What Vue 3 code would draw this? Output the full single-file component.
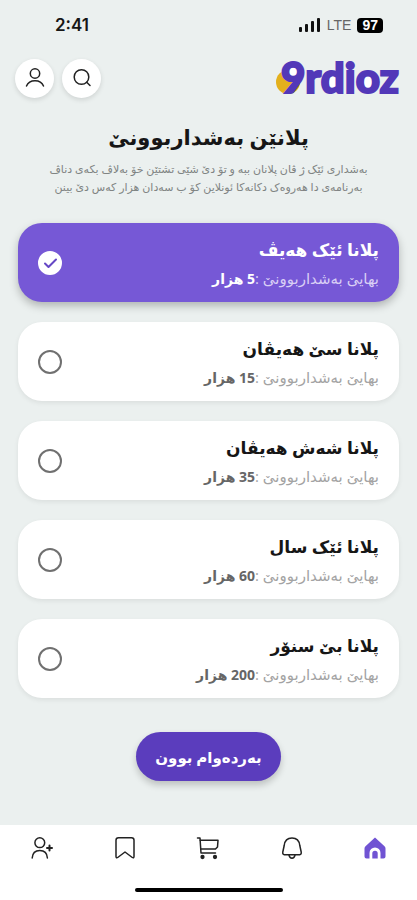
<script setup>
import { ref } from 'vue'

const plans = [
  { id: 'one', title: 'پلانا ئێک هەیڤ', price: 5 },
  { id: 'three', title: 'پلانا سێ هەیڤان', price: 15 },
  { id: 'six', title: 'پلانا شەش هەیڤان', price: 35 },
  { id: 'year', title: 'پلانا ئێک سال', price: 60 },
  { id: 'unlimited', title: 'پلانا بێ سنۆر', price: 200 }
]
const selected = ref('one')
</script>

<template>
  <div class="page">
    <div class="status">
      <span class="time">2:41</span>
      <div class="status-right">
        <svg class="signal" width="22" height="14" viewBox="0 0 22 14">
          <rect x="0" y="9" width="3" height="5" rx="1" />
          <rect x="6" y="6" width="3" height="8" rx="1" />
          <rect x="12" y="3" width="3" height="11" rx="1" />
          <rect x="18" y="0" width="3" height="14" rx="1" />
        </svg>
        <span class="network">LTE</span>
        <span class="battery">97</span>
      </div>
    </div>

    <header class="top">
      <div class="actions">
        <button class="round" type="button">
          <svg width="22" height="22" viewBox="0 0 22 22">
            <circle cx="11" cy="6.500" r="4.700" />
            <path d="M2.500 19c1.400-3.500 4.600-5.300 8.500-5.300s7.100 1.800 8.500 5.300" />
          </svg>
        </button>
        <button class="round" type="button">
          <svg width="22" height="22" viewBox="0 0 22 22">
            <circle cx="10.500" cy="10" r="7.300" />
            <path d="M15.700 15.200L19 18.500" />
          </svg>
        </button>
      </div>
      <svg class="logo" width="128" height="50" viewBox="0 0 128 50">
        <circle cx="12" cy="29" r="12" fill="#e3b01c" />
        <circle cx="17" cy="20" r="8" fill="#fff" />
        <circle cx="55" cy="29" r="8" fill="#fff" />
        <circle cx="91" cy="29" r="8" fill="#fff" />
        <text x="5" y="40">9rdioz</text>
      </svg>
    </header>

    <main class="content" dir="rtl">
      <h1>پلانێن بەشداربوونێ</h1>
      <p class="intro">
        بەشداری ئێک ژ ڤان پلانان ببە و تۆ دێ شێی تشتێن خۆ بەلاڤ بکەی دناڤ<br />
        بەرنامەی دا هەروەک دکانەکا ئونلاین کۆ ب سەدان هزار کەس دێ بینن
      </p>

      <div class="plans">
        <label
          v-for="plan in plans"
          :key="plan.id"
          class="plan"
          :class="{ active: selected === plan.id }"
        >
          <span class="text">
            <span class="title">{{ plan.title }}</span>
            <span class="price">بهایێ بەشداربوونێ :<b>{{ plan.price }} هزار</b></span>
          </span>
          <span class="mark">
            <input v-model="selected" type="radio" name="plan" :value="plan.id" />
            <svg v-if="selected === plan.id" width="24" height="24" viewBox="0 0 24 24">
              <path d="M7 12.500l3.500 3.500 7.500-7.500" />
            </svg>
          </span>
        </label>
      </div>

      <button class="continue" type="button">بەردەوام بوون</button>
    </main>

    <nav class="nav" dir="rtl">
      <div class="tabs">
        <a href="#home" class="home">
          <svg width="24" height="24" viewBox="0 0 24 24">
            <path d="M12 1.500L2.500 10.200q-1 1-1 2.300V20.500q0 2 2 2H6.500V17a5.500 5.500 0 0 1 11 0V22.500H20.500q2 0 2-2V12.500q0-1.300-1-2.300z" />
            <path d="M9.300 22.500V17.500a2.700 2.700 0 0 1 5.400 0V22.500z" />
          </svg>
        </a>
        <a href="#alerts">
          <svg width="24" height="24" viewBox="0 0 24 24">
            <path d="M12 2C7.500 2 4.700 5 4.200 9.500L2.800 16q-.4 2.500 1.500 2.700h15.400q1.900-.2 1.500-2.700l-1.400-6.500C19.300 5 16.500 2 12 2z" />
            <path d="M9 19.200q.6 3 3 3t3-3" />
          </svg>
        </a>
        <a href="#cart">
          <svg width="24" height="24" viewBox="0 0 24 24">
            <path d="M1.500 2H4l1 15h14.500" />
            <path d="M4.200 4.200H22L21.500 11 19.500 13H5" />
            <circle cx="6.500" cy="21" r="1.400" class="dot" />
            <circle cx="19" cy="21" r="1.400" class="dot" />
          </svg>
        </a>
        <a href="#saved">
          <svg width="24" height="24" viewBox="0 0 24 24">
            <path d="M5.500 1.800h13q2.500 0 2.500 2.500V20.500q-.2 2-1.700 1L12 16 4.700 21.500q-1.500 1-1.700-1V4.300q0-2.500 2.500-2.500z" />
          </svg>
        </a>
        <a href="#follow">
          <svg width="24" height="24" viewBox="0 0 24 24">
            <circle cx="9.800" cy="6.700" r="4.900" />
            <path d="M2.200 22c.3-4.800 3.300-7.500 7.600-7.500s7.300 2.700 7.600 7.500" />
            <path d="M19.500 9.500v5M17 12h5" class="plus" />
          </svg>
        </a>
      </div>
      <div class="indicator"></div>
    </nav>
  </div>
</template>

<style>
body {
  margin: 0;
}
</style>

<style scoped>
.page {
  min-height: 100vh;
  display: flex;
  flex-direction: column;
  background: #ebf0ef;
  font-family: "Open Sans", "DejaVu Sans", sans-serif;
  color: #161616;
}
.status {
  display: flex;
  justify-content: space-between;
  align-items: center;
  height: 50px;
  padding: 0 34px 0 55px;
}
.time {
  font: 600 17px/20px Inter, sans-serif;
}
.status-right {
  display: flex;
  align-items: center;
  gap: 6px;
}
.signal {
  fill: #111;
}
.network {
  font: 400 14px/16px "Liberation Sans", sans-serif;
  color: #666;
}
.battery {
  padding: 0 5px;
  border-radius: 4px;
  background: #000;
  color: #fff;
  font: 700 14px/15px "Liberation Sans", sans-serif;
}
.top {
  display: flex;
  justify-content: space-between;
  align-items: center;
  height: 56px;
  padding: 0 13px 0 15px;
}
.actions {
  display: flex;
  gap: 8px;
}
.round {
  display: grid;
  place-items: center;
  width: 39px;
  height: 39px;
  padding: 0;
  border: 0;
  border-radius: 50%;
  background: #fff;
  box-shadow: 0 2px 5px rgba(0, 0, 0, 0.12);
}
.round svg,
.tabs svg {
  fill: none;
  stroke: #222;
  stroke-width: 1.5;
  stroke-linecap: round;
  stroke-linejoin: round;
}
.logo {
  overflow: visible;
}
.logo text {
  font: 900 42px Lato, sans-serif;
  fill: #5238b8;
  stroke: #5238b8;
  stroke-width: 2px;
}
.content {
  flex: 1;
  display: flex;
  flex-direction: column;
  align-items: center;
  padding: 13px 18px 24px;
}
h1 {
  margin: 0;
  font-size: 21px;
  line-height: 36px;
  font-weight: 700;
}
.intro {
  margin: 5px 0 0;
  font-size: 11px;
  line-height: 18px;
  text-align: center;
  white-space: nowrap;
  color: #808483;
}
.plans {
  align-self: stretch;
  display: flex;
  flex-direction: column;
  gap: 20px;
  margin-top: 27px;
}
.plan {
  display: flex;
  justify-content: space-between;
  align-items: center;
  height: 79px;
  padding: 0 20px;
  border-radius: 24px;
  background: #fff;
  box-shadow: 0 2px 5px rgba(0, 0, 0, 0.07);
}
.text {
  display: flex;
  flex-direction: column;
}
.title {
  font-size: 17px;
  line-height: 32px;
  font-weight: 700;
}
.price {
  font-size: 15px;
  line-height: 24px;
  color: #a3a3a3;
}
.price b {
  font-size: 14px;
  color: #666;
}
.mark {
  display: grid;
}
.mark > * {
  grid-area: 1 / 1;
}
input {
  appearance: none;
  width: 24px;
  height: 24px;
  margin: 0;
  border: 2px solid #707070;
  border-radius: 50%;
}
.mark svg {
  fill: none;
  stroke: #6547c5;
  stroke-width: 2;
  stroke-linecap: round;
  stroke-linejoin: round;
}
.active {
  background: #7658d6;
  color: #fff;
  box-shadow: 0 4px 8px rgba(0, 0, 0, 0.25);
}
.active .price {
  color: #d9cff5;
}
.active .price b {
  color: #fff;
}
.active input {
  border-color: #fff;
  background: #fff;
}
.continue {
  height: 49px;
  margin-top: 34px;
  padding: 0 19px;
  border: 0;
  border-radius: 25px;
  background: #5b3dbd;
  color: #fff;
  font: 700 15px/24px "Open Sans", "DejaVu Sans", sans-serif;
  box-shadow: 0 4px 7px rgba(0, 0, 0, 0.2);
}
.nav {
  display: flex;
  flex-direction: column;
  align-items: center;
  padding: 11px 0 8px;
  background: #fff;
}
.tabs {
  display: flex;
  align-self: stretch;
}
.tabs a {
  flex: 1;
  display: flex;
  justify-content: center;
}
.tabs .dot {
  fill: #222;
}
.tabs .plus {
  stroke-width: 2;
}
.tabs .home svg {
  fill: #7053d3;
  stroke: none;
}
.indicator {
  width: 148px;
  height: 4px;
  margin-top: 28px;
  border-radius: 2px;
  background: #000;
}
</style>
